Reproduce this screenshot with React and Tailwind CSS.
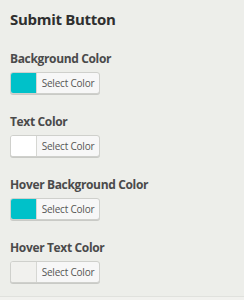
export default function App() {
  const items = [
    { label: "Background Color", color: "#00c1c9" },
    { label: "Text Color", color: "#ffffff" },
    { label: "Hover Background Color", color: "#00c1c9" },
    { label: "Hover Text Color", color: "#f1f1ee" },
  ];
  return (
    <div className="w-[244px] h-[300px] bg-[#f1f1ee] overflow-hidden" style={{ fontFamily: '"Open Sans", "Noto Sans", sans-serif' }}>
      <div className="h-[297px] bg-[#edeeea] border-b border-[#e0e1dd] px-[10px] pt-[9px]">
        <h2 className="text-[15px] leading-[20px] font-bold text-[#2f2f2f] tracking-[-0.3px]">Submit Button</h2>
        <div className="mt-[22px] flex flex-col gap-[20px]">
          {items.map((it) => (
            <div key={it.label} className="flex flex-col">
              <div className="text-[12px] leading-[16px] font-bold text-[#4a4a4a] tracking-[-0.35px]">{it.label}</div>
              <div className="mt-[5px] flex h-[22px] w-[90px] rounded-[3px] border border-[#cfd0cc] bg-[#f7f7f7] shadow-[0_1px_0_#c9cac6] overflow-hidden">
                <div className="w-[26px] h-full border-r border-[#d6d7d3]" style={{ backgroundColor: it.color }} />
                <div className="flex-1 flex items-center justify-center text-[10px] text-[#555] tracking-[-0.2px]">Select Color</div>
              </div>
            </div>
          ))}
        </div>
      </div>
    </div>
  );
}
